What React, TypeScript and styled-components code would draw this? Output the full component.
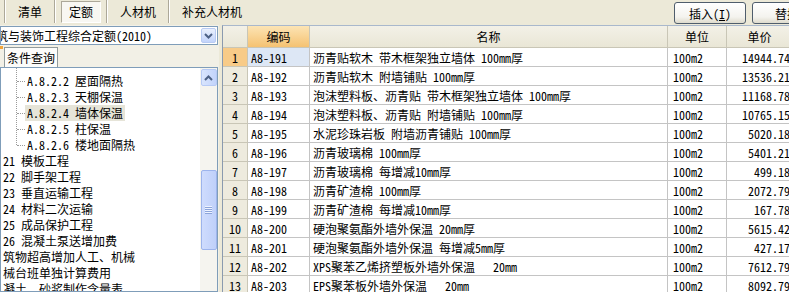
import styled, { createGlobalStyle } from "styled-components"

const GlobalStyle = createGlobalStyle`
  html, body {
    margin: 0;
    padding: 0;
    background: #ECE9D8;
    overflow: hidden;
  }
  body {
    font-family: "Noto Sans Mono CJK SC", "Liberation Sans", "Noto Sans CJK SC", sans-serif;
    font-size: 12px;
    color: #000;
  }
`

type Row = { no: number; code: string; name: string; unit: string; price: string }

const rows: Row[] = [
    { no: 1, code: "A8-191", name: "沥青贴软木 带木框架独立墙体 100mm厚", unit: "100m2", price: "14944.74" },
    { no: 2, code: "A8-192", name: "沥青贴软木 附墙铺贴 100mm厚", unit: "100m2", price: "13536.21" },
    { no: 3, code: "A8-193", name: "泡沫塑料板、沥青贴 带木框架独立墙体 100mm厚", unit: "100m2", price: "11168.78" },
    { no: 4, code: "A8-194", name: "泡沫塑料板、沥青贴 附墙铺贴 100mm厚", unit: "100m2", price: "10765.15" },
    { no: 5, code: "A8-195", name: "水泥珍珠岩板 附墙沥青铺贴 100mm厚", unit: "100m2", price: "5020.18" },
    { no: 6, code: "A8-196", name: "沥青玻璃棉 100mm厚", unit: "100m2", price: "5401.21" },
    { no: 7, code: "A8-197", name: "沥青玻璃棉 每增减10mm厚", unit: "100m2", price: "499.18" },
    { no: 8, code: "A8-198", name: "沥青矿渣棉 100mm厚", unit: "100m2", price: "2072.79" },
    { no: 9, code: "A8-199", name: "沥青矿渣棉 每增减10mm厚", unit: "100m2", price: "167.78" },
    { no: 10, code: "A8-200", name: "硬泡聚氨酯外墙外保温 20mm厚", unit: "100m2", price: "5615.42" },
    { no: 11, code: "A8-201", name: "硬泡聚氨酯外墙外保温 每增减5mm厚", unit: "100m2", price: "427.17" },
    { no: 12, code: "A8-202", name: "XPS聚苯乙烯挤塑板外墙外保温   20mm", unit: "100m2", price: "7612.79" },
    { no: 13, code: "A8-203", name: "EPS聚苯板外墙外保温   20mm", unit: "100m2", price: "8092.79" },
]

const childItems = [
    { code: "A.8.2.2", name: "屋面隔热" },
    { code: "A.8.2.3", name: "天棚保温" },
    { code: "A.8.2.4", name: "墙体保温", selected: true },
    { code: "A.8.2.5", name: "柱保温" },
    { code: "A.8.2.6", name: "楼地面隔热" },
]

const topItems = [
    "21 模板工程",
    "22 脚手架工程",
    "23 垂直运输工程",
    "24 材料二次运输",
    "25 成品保护工程",
    "26 混凝土泵送增加费",
    "筑物超高增加人工、机械",
    "械台班单独计算费用",
    "凝土、砂浆制作含量表",
]

const App = () => {
    return (
        <>
            <GlobalStyle />
            <Window>
                <ToolBar>
                    <Sep />
                    <Tab>清单</Tab>
                    <Sep />
                    <Tab $pressed>定额</Tab>
                    <Sep />
                    <Tab>人材机</Tab>
                    <Sep />
                    <Tab>补充人材机</Tab>
                    <ButtonGroup>
                        <Button $w={72}>插入(<u>I</u>)</Button>
                        <Button $w={70}>替换</Button>
                    </ButtonGroup>
                </ToolBar>

                <Body>
                    <LeftPane>
                        <Combo>
                            <ComboText>筑与装饰工程综合定额(2010)</ComboText>
                            <BlueButton>
                                <svg width="9" height="6" viewBox="0 0 9 6">
                                    <path d="M1 1 L4.5 4.5 L8 1" fill="none" stroke="#4D6185" strokeWidth="2" />
                                </svg>
                            </BlueButton>
                        </Combo>

                        <TabStrip>
                            <QueryTab>条件查询</QueryTab>
                        </TabStrip>

                        <TreePanel>
                            <TreeList>
                                <ChildGroup>
                                    {childItems.map((c) => (
                                        <TreeRow key={c.code} $child>
                                            <TreeLabel $selected={!!c.selected}>{c.code} {c.name}</TreeLabel>
                                        </TreeRow>
                                    ))}
                                </ChildGroup>
                                {topItems.map((t) => (
                                    <TreeRow key={t}>
                                        <TreeLabel>{t}</TreeLabel>
                                    </TreeRow>
                                ))}
                            </TreeList>
                            <ScrollBar>
                                <ScrollArrow>
                                    <svg width="9" height="6" viewBox="0 0 9 6">
                                        <path d="M1 5 L4.5 1.5 L8 5" fill="none" stroke="#4D6185" strokeWidth="2" />
                                    </svg>
                                </ScrollArrow>
                                <Thumb>
                                    <svg width="7" height="8" viewBox="0 0 7 8">
                                        <path d="M0 0.5 H7 M0 2.5 H7 M0 4.5 H7 M0 6.5 H7" stroke="#EEF3FF" />
                                        <path d="M0 1.5 H7 M0 3.5 H7 M0 5.5 H7 M0 7.5 H7" stroke="#8CA4DA" />
                                    </svg>
                                </Thumb>
                            </ScrollBar>
                        </TreePanel>
                    </LeftPane>

                    <Splitter />

                    <RightPane>
                        <HeadRow>
                            <HeadCell />
                            <HeadCell $active>编码</HeadCell>
                            <HeadCell>名称</HeadCell>
                            <HeadCell>单位</HeadCell>
                            <HeadCell>单价</HeadCell>
                        </HeadRow>
                        {rows.map((r) => (
                            <DataRow key={r.no}>
                                <NumCell $active={r.no === 1}>{r.no}</NumCell>
                                <Cell $current={r.no === 1}>{r.code}</Cell>
                                <Cell>{r.name}</Cell>
                                <Cell $pad={5}>{r.unit}</Cell>
                                <PriceCell>{r.price}</PriceCell>
                            </DataRow>
                        ))}
                    </RightPane>
                </Body>
            </Window>
        </>
    )
}

const Window = styled.div`
    width: 789px;
    height: 292px;
    display: flex;
    flex-direction: column;
    overflow: hidden;
    background: #ECE9D8;
`

const ToolBar = styled.div`
    height: 25px;
    flex-shrink: 0;
    display: flex;
    align-items: stretch;
    padding-left: 4px;
    overflow: hidden;
`

const Sep = styled.span`
    width: 0;
    margin-bottom: 2px;
    border-left: 1px solid #ACA899;
    border-right: 1px solid #FFFFFF;
`

const Tab = styled.span<{ $pressed?: boolean }>`
    display: flex;
    align-items: center;
    white-space: nowrap;
    padding: 0 12px 2px;
    ${({ $pressed }) => $pressed && `
        margin: 1px 5px 2px;
        padding: 0 7px 1px;
        background: #F8F7F2;
        border: 1px solid;
        border-color: #ACA899 #FFFFFF #FFFFFF #ACA899;
    `}
`

const ButtonGroup = styled.div`
    margin-left: auto;
    margin-right: -33px;
    display: flex;
    gap: 6px;
    padding: 2px 0 1px;
`

const Button = styled.button<{ $w: number }>`
    width: ${({ $w }) => $w}px;
    flex-shrink: 0;
    height: 22px;
    padding: 0;
    font: inherit;
    color: #000;
    border: 1px solid #4F5D6C;
    border-radius: 3px;
    background: linear-gradient(#FFFFFF, #F4F3EE 70%, #DEDBCD);
    u {
        text-decoration: underline;
    }
`

const Body = styled.div`
    flex: 1;
    min-height: 0;
    display: flex;
`

const LeftPane = styled.div`
    width: 219px;
    flex-shrink: 0;
    display: flex;
    flex-direction: column;
    background: #F2F0E6;
`

const Combo = styled.div`
    margin-top: 1px;
    width: 218px;
    height: 19px;
    box-sizing: border-box;
    border: 1px solid #7F9DB9;
    background: #FFFFFF;
    display: flex;
    align-items: center;
`

const ComboText = styled.div`
    flex: 1;
    overflow: hidden;
    white-space: nowrap;
    text-indent: -5px;
`

const BlueButton = styled.span`
    width: 15px;
    height: 15px;
    margin-right: 1px;
    box-sizing: border-box;
    display: flex;
    align-items: center;
    justify-content: center;
    border: 1px solid #B9CBF3;
    border-radius: 2px;
    background: linear-gradient(#E9F0FD, #C3D4FB);
`

const TabStrip = styled.div`
    height: 22px;
    flex-shrink: 0;
    display: flex;
    align-items: flex-end;
    padding-left: 4px;
    position: relative;
    &::before {
        content: "";
        position: absolute;
        left: 0;
        top: 1px;
        width: 3px;
        height: 3px;
        background: #F2A53B;
    }
`

const QueryTab = styled.div`
    height: 20px;
    box-sizing: border-box;
    padding: 0 2px;
    display: flex;
    align-items: center;
    border: 1px solid #919B9C;
    border-bottom: none;
    background: #FCFCFA;
`

const TreePanel = styled.div`
    flex: 1;
    min-height: 0;
    width: 218px;
    box-sizing: border-box;
    display: flex;
    border: 1px solid #7F9DB9;
    background: #FFFFFF;
    overflow: hidden;
`

const TreeList = styled.div`
    flex: 1;
    min-width: 0;
    padding-top: 5px;
    overflow: hidden;
    white-space: nowrap;
`

const ChildGroup = styled.div`
    position: relative;
    &::before {
        content: "";
        position: absolute;
        left: 15px;
        top: -5px;
        bottom: 8px;
        border-left: 1px dotted #9A9A9A;
    }
`

const TreeRow = styled.div<{ $child?: boolean }>`
    height: 16px;
    line-height: 16px;
    position: relative;
    padding-left: ${({ $child }) => ($child ? 24 : 0)}px;
    ${({ $child }) => $child && `
        &::before {
            content: "";
            position: absolute;
            left: 16px;
            top: 8px;
            width: 8px;
            border-top: 1px dotted #9A9A9A;
        }
    `}
`

const TreeLabel = styled.span<{ $selected?: boolean }>`
    display: inline-block;
    padding: 0 2px;
    background: ${({ $selected }) => ($selected ? "#E6E4D8" : "transparent")};
`

const ScrollBar = styled.div`
    width: 17px;
    flex-shrink: 0;
    display: flex;
    flex-direction: column;
    align-items: center;
    padding-top: 1px;
    background: #F5F4EF;
`

const ScrollArrow = styled.div`
    width: 16px;
    height: 17px;
    box-sizing: border-box;
    display: flex;
    align-items: center;
    justify-content: center;
    border: 1px solid #B7CAF5;
    border-radius: 2px;
    background: linear-gradient(90deg, #D9E5FD, #C2D3FB);
`

const Thumb = styled.div`
    margin-top: 84px;
    width: 16px;
    height: 80px;
    box-sizing: border-box;
    display: flex;
    align-items: center;
    justify-content: center;
    border: 1px solid #9DB4EC;
    border-radius: 2px;
    background: linear-gradient(90deg, #CFDCFD, #BFD0FA);
`

const Splitter = styled.div`
    width: 3px;
    flex-shrink: 0;
    background: #ECE9D8;
`

const RightPane = styled.div`
    flex: 1;
    min-width: 0;
    overflow: hidden;
    border-top: 1px solid #A9B8CC;
    border-left: 1px solid #8A9AAF;
    background: #FFFFFF;
`

const columns = "25px 62px 358px 59px 66px"

const HeadRow = styled.div`
    display: grid;
    grid-template-columns: ${columns};
    height: 22px;
`

const HeadCell = styled.div<{ $active?: boolean }>`
    box-sizing: border-box;
    display: flex;
    align-items: center;
    justify-content: center;
    border-right: 1px solid #C9C6B6;
    border-bottom: 1px solid #C9C6B6;
    background: ${({ $active }) =>
        $active ? "linear-gradient(#FCE4B4, #F5C272)" : "linear-gradient(#F3F1E7, #E9E6D6)"};
`

const DataRow = styled.div`
    display: grid;
    grid-template-columns: ${columns};
    height: 19px;
`

const NumCell = styled.div<{ $active?: boolean }>`
    box-sizing: border-box;
    display: flex;
    align-items: center;
    justify-content: center;
    border-right: 1px solid #C9C6B6;
    border-bottom: 1px solid #C9C6B6;
    background: ${({ $active }) => ($active ? "#F8CB88" : "#EEEBDE")};
`

const Cell = styled.div<{ $current?: boolean; $pad?: number }>`
    box-sizing: border-box;
    display: flex;
    align-items: center;
    padding-left: ${({ $pad }) => $pad ?? 3}px;
    white-space: pre;
    overflow: hidden;
    border-right: 1px solid #C4C4C4;
    border-bottom: 1px solid #C4C4C4;
    background: ${({ $current }) => ($current ? "#DDE7F5" : "#FFFFFF")};
`

const PriceCell = styled(Cell)`
    justify-content: flex-end;
    padding-left: 0;
    padding-right: 2px;
`

export default App
